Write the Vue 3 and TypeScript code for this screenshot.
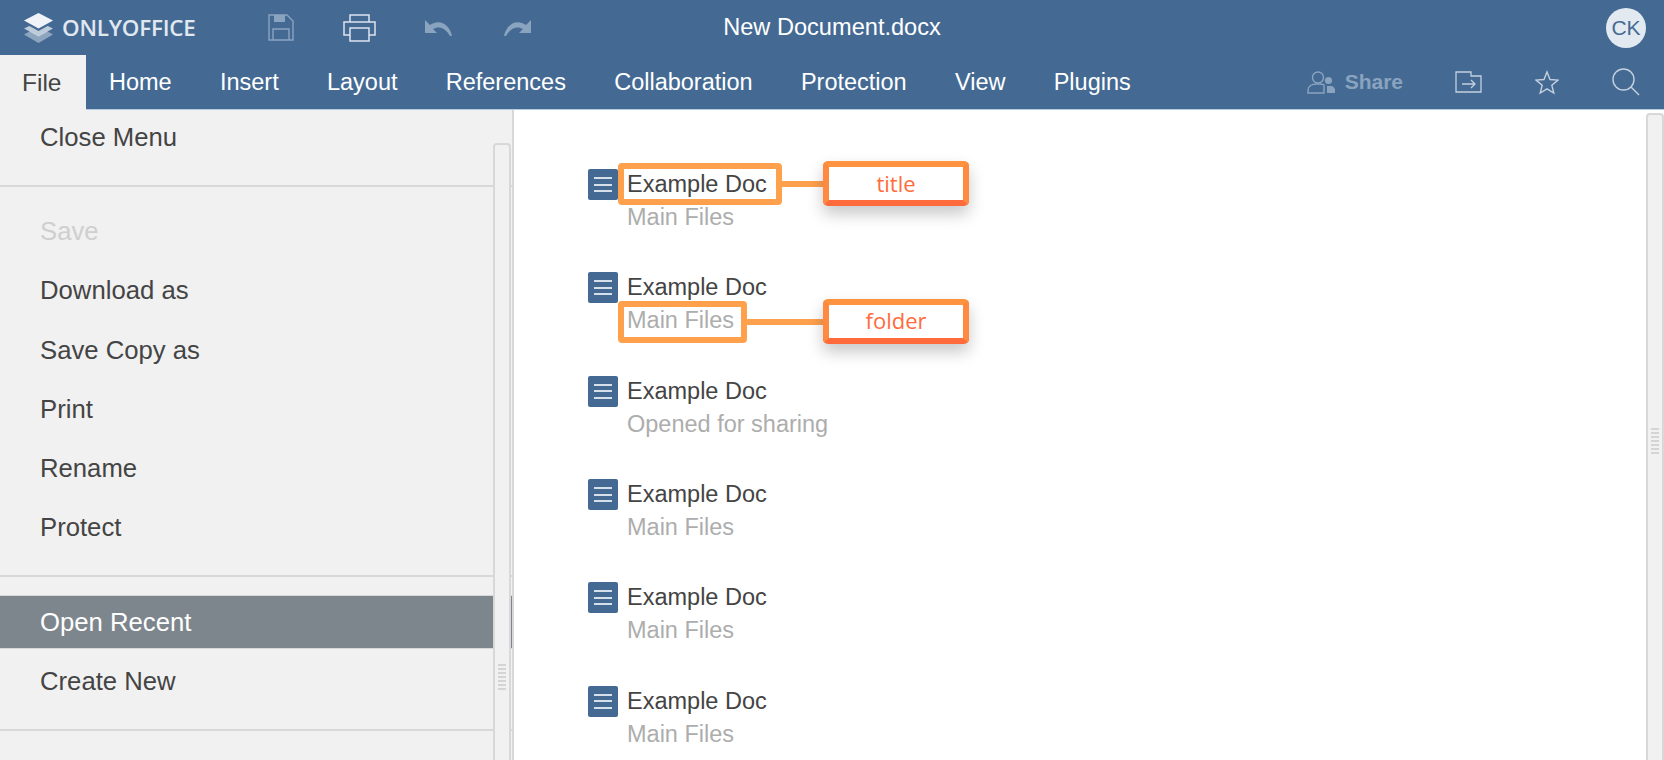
<script setup lang="ts">
interface MenuItem {
  label: string;
  disabled?: boolean;
  active?: boolean;
}

const menuGroups: MenuItem[][] = [
  [{ label: "Close Menu" }],
  [
    { label: "Save", disabled: true },
    { label: "Download as" },
    { label: "Save Copy as" },
    { label: "Print" },
    { label: "Rename" },
    { label: "Protect" },
  ],
  [{ label: "Open Recent", active: true }, { label: "Create New" }],
];

const tabs = [
  "Home",
  "Insert",
  "Layout",
  "References",
  "Collaboration",
  "Protection",
  "View",
  "Plugins",
];

const recent = [
  { title: "Example Doc", folder: "Main Files", note: "title" },
  { title: "Example Doc", folder: "Main Files", note: "folder" },
  { title: "Example Doc", folder: "Opened for sharing", note: "" },
  { title: "Example Doc", folder: "Main Files", note: "" },
  { title: "Example Doc", folder: "Main Files", note: "" },
  { title: "Example Doc", folder: "Main Files", note: "" },
];

const gripLines = [0, 1, 2, 3, 4, 5, 6];
</script>

<template>
  <div class="app">
    <header class="titlebar">
      <div class="bar-left">
        <svg class="logo" width="31" height="32" viewBox="0 0 31 32">
          <path d="M15.5 14.5 1 22.5 15.5 31 30 22.5Z" fill="#fff" opacity=".4" />
          <path d="M15.5 9 1 16 15.5 24 30 16Z" fill="#446a94" />
          <path d="M15.5 9.5 1 16.5 15.5 24.5 30 16.5Z" fill="#fff" opacity=".65" />
          <path d="M15.5 9 1 16 15.5 24 30 16Z" fill="#446a94" transform="translate(0 -5)" />
          <path d="M15.5 1 1 8.5 15.5 16.5 30 8.5Z" fill="#fff" opacity=".92" />
        </svg>
        <span class="brand">ONLYOFFICE</span>
        <div class="tools">
          <span class="tool">
            <svg width="26" height="27" viewBox="0 0 26 27" fill="none" stroke="#8aa3bf" stroke-width="1.4">
              <path d="M1 1h18l6 6v19H1Z" />
              <path d="M5 26V15h16v11" />
              <path d="M6 1h11v7H6Z" fill="#8aa3bf" stroke="none" />
            </svg>
          </span>
          <span class="tool">
            <svg width="33" height="28" viewBox="0 0 33 28" fill="none" stroke="#dbe4ed" stroke-width="1.5">
              <path d="M7 8V1h19v7" />
              <path d="M7 21H1V8h31v13h-6" />
              <path d="M7 14h19v13H7Z" />
            </svg>
          </span>
          <span class="tool">
            <svg width="29" height="18" viewBox="0 0 29 18" fill="#8aa3bf">
              <path d="M1 1v13h12l-4-4c5-3 12-2 17 7h2C26 6 16-1 6 6Z" />
            </svg>
          </span>
          <span class="tool">
            <svg width="29" height="18" viewBox="0 0 29 18" fill="#8aa3bf">
              <path d="M28 1v13H16l4-4c-5-3-12-2-17 7H1C3 6 13-1 23 6Z" />
            </svg>
          </span>
        </div>
      </div>
      <div class="doc-name">New Document.docx</div>
      <div class="bar-right">
        <span class="avatar">CK</span>
      </div>
    </header>

    <nav class="tabbar">
      <a class="tab tab-file">File</a>
      <a v-for="tab in tabs" :key="tab" class="tab">{{ tab }}</a>
      <div class="tab-actions">
        <span class="share">
          <svg width="28" height="23" viewBox="0 0 28 23" fill="none" stroke="#8aa3bf" stroke-width="1.4">
            <circle cx="11" cy="6.5" r="5.5" />
            <path d="M1 22v-3c0-4 4-6 8-6h4c2 0 3 .4 4 1v8Z" />
            <circle cx="21.5" cy="9.5" r="3.6" fill="#8aa3bf" stroke="none" />
            <path d="M20 15h4c2 0 4 2 4 4v3h-8Z" fill="#8aa3bf" stroke="none" />
          </svg>
          Share
        </span>
        <svg width="27" height="22" viewBox="0 0 27 22" fill="none" stroke="#c3d0de" stroke-width="1.3">
          <path d="M1 1h15v4h10v16H1Z" />
          <path d="M7 13h13M16 9l4 4-4 4" />
        </svg>
        <svg width="24" height="25" viewBox="0 0 24 25" fill="none" stroke="#c3d0de" stroke-width="1.4">
          <path d="M12 2l3 7.5 8 .6-6.2 5.1 2 7.8L12 18.8 5.2 23l2-7.8L1 10.1l8-.6Z" />
        </svg>
        <svg width="28" height="28" viewBox="0 0 28 28" fill="none" stroke="#c3d0de" stroke-width="1.4">
          <circle cx="11.5" cy="11.5" r="10.5" />
          <path d="M19 19l8 8" />
        </svg>
      </div>
    </nav>

    <div class="body">
      <aside class="side">
        <section v-for="(group, i) in menuGroups" :key="i" class="menu-group">
          <div
            v-for="item in group"
            :key="item.label"
            class="menu-item"
            :class="{ disabled: item.disabled, active: item.active }"
          >
            {{ item.label }}
          </div>
        </section>
        <div class="scroll scroll-side">
          <div class="grip">
            <i v-for="n in gripLines" :key="n" />
          </div>
        </div>
      </aside>

      <main class="recent">
        <div v-for="(doc, i) in recent" :key="i" class="doc">
          <span class="doc-icon">
            <i /><i /><i />
          </span>
          <div class="doc-text">
            <div class="doc-title">{{ doc.title }}</div>
            <div class="doc-folder">{{ doc.folder }}</div>
          </div>
          <template v-if="doc.note">
            <span class="mark" :class="`mark-${doc.note}`" />
            <span class="link" :class="`link-${doc.note}`" />
            <span class="note" :class="`note-${doc.note}`">{{ doc.note }}</span>
          </template>
        </div>
        <div class="scroll scroll-main">
          <div class="grip">
            <i v-for="n in gripLines" :key="n" />
          </div>
        </div>
      </main>
    </div>
  </div>
</template>

<style scoped>
.app {
  height: 760px;
  display: flex;
  flex-direction: column;
  overflow: hidden;
  font-family: "Liberation Sans", Arial, sans-serif;
  background: #fff;
}

.titlebar {
  height: 55px;
  flex: none;
  display: grid;
  grid-template-columns: 1fr auto 1fr;
  align-items: center;
  background: #446a94;
  color: #fff;
}
.bar-left {
  display: flex;
  align-items: center;
  padding-left: 23px;
}
.logo {
  margin-right: 8px;
}
.brand {
  width: 132px;
  font-family: "Open Sans", sans-serif;
  font-size: 22.4px;
  font-weight: 600;
  letter-spacing: -0.2px;
  color: #e1e8f0;
}
.tools {
  display: flex;
  align-items: center;
  margin-left: 47px;
}
.tool {
  width: 79px;
  display: flex;
  justify-content: center;
}
.doc-name {
  font-size: 23.6px;
}
.bar-right {
  display: flex;
  justify-content: flex-end;
  padding-right: 18px;
}
.avatar {
  width: 40px;
  height: 40px;
  border-radius: 50%;
  display: flex;
  align-items: center;
  justify-content: center;
  background: #e3e9f0;
  color: #446a94;
  font-size: 21px;
}

.tabbar {
  height: 54px;
  flex: none;
  display: flex;
  align-items: stretch;
  background: #446a94;
  border-bottom: 1px solid #b4cade;
}
.tab {
  display: flex;
  align-items: center;
  padding: 0 23px;
  margin-right: 2.24px;
  font-size: 23.5px;
  color: #fff;
}
.tab-file {
  width: 86px;
  box-sizing: border-box;
  padding-left: 22px;
  margin-right: 0;
  margin-bottom: -1px;
  background: #f1f1f1;
  color: #444;
  font-size: 24.5px;
}
.tab-actions {
  margin-left: auto;
  display: flex;
  align-items: center;
  gap: 53px;
  padding-right: 24px;
}
.share {
  display: flex;
  align-items: center;
  gap: 10px;
  margin-right: -1px;
  font-size: 21px;
  font-weight: 700;
  color: #8aa3bf;
}

.body {
  flex: 1;
  min-height: 0;
  display: flex;
}

.side {
  position: relative;
  width: 514px;
  flex: none;
  box-sizing: border-box;
  background: #f1f1f1;
  border-right: 2px solid #d8d8d8;
}
.menu-group {
  display: flex;
  flex-direction: column;
  gap: 7.3px;
  padding: 19px 0 21.5px;
  border-bottom: 2px solid #d8d8d8;
}
.menu-group:first-child {
  padding-top: 1px;
}
.menu-item {
  height: 52px;
  box-sizing: border-box;
  display: flex;
  align-items: center;
  padding-left: 40px;
  font-size: 25.7px;
  color: #444;
}
.menu-item.disabled {
  color: #cfcfcf;
}
.menu-item.active {
  background: #7e868d;
  color: #fff;
  box-shadow: 0 0 0 1px #d8d8d8;
}

.scroll {
  position: absolute;
  box-sizing: border-box;
  width: 18px;
  background: #f1f1f1;
  border: 2px solid #d8d8d8;
  border-bottom: none;
  border-radius: 4px 4px 0 0;
}
.scroll-side {
  top: 33px;
  bottom: 0;
  left: 493px;
}
.scroll-main {
  top: 3px;
  bottom: 0;
  right: 0;
}
.grip {
  position: absolute;
  left: 3px;
  right: 3px;
  display: flex;
  flex-direction: column;
  gap: 2px;
}
.scroll-side .grip {
  top: 519px;
}
.scroll-main .grip {
  top: 313px;
}
.grip i {
  height: 2px;
  background: #d4d4d4;
}

.recent {
  position: relative;
  flex: 1;
  padding: 57px 0 0 74px;
  display: flex;
  flex-direction: column;
  gap: 36.36px;
}
.doc {
  position: relative;
  display: flex;
  align-items: flex-start;
  gap: 9px;
}
.doc-icon {
  width: 30px;
  height: 31px;
  margin-top: 2px;
  flex: none;
  box-sizing: border-box;
  border-radius: 2px;
  background: #446a94;
  display: flex;
  flex-direction: column;
  justify-content: center;
  gap: 4.5px;
  padding: 0 6px;
}
.doc-icon i {
  height: 2px;
  background: #d6e0ea;
}
.doc-text {
  margin-top: 1px;
}
.doc-title,
.doc-folder {
  height: 33px;
  line-height: 33px;
  font-size: 23.5px;
  white-space: nowrap;
}
.doc-title {
  color: #444;
}
.doc-folder {
  color: #adadad;
}

.mark {
  position: absolute;
  left: 30px;
  box-sizing: border-box;
  height: 42px;
  border: 6px solid #ffa04d;
  border-radius: 4px;
}
.mark-title {
  top: -4px;
  width: 164px;
}
.mark-folder {
  top: 30.5px;
  width: 129px;
}
.link {
  position: absolute;
  height: 6px;
  background: #ffa04d;
}
.link-title {
  left: 194px;
  top: 14px;
  width: 42px;
}
.link-folder {
  left: 159px;
  top: 48.5px;
  width: 77px;
}
.note {
  position: absolute;
  left: 235px;
  box-sizing: border-box;
  width: 146px;
  height: 45px;
  padding-bottom: 2px;
  display: flex;
  align-items: center;
  justify-content: center;
  background: #fff;
  border: 6px solid;
  border-color: #ff9340 #ff8a3f #ff6b3d #ff8a3f;
  border-radius: 5px;
  box-shadow: 0 8px 16px rgba(0, 0, 0, 0.22);
  font-family: "Open Sans", sans-serif;
  font-size: 22px;
  color: #ff6b3d;
}
.note-title {
  top: -6px;
}
.note-folder {
  top: 28.5px;
}
</style>

<style>
body {
  margin: 0;
  overflow: hidden;
}
</style>
